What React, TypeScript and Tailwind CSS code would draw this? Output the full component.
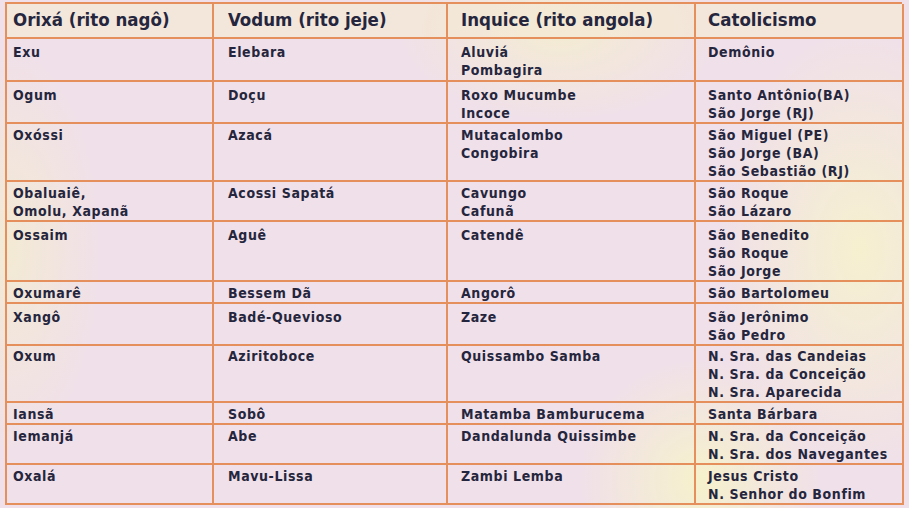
type Row = { cells: string[][]; h: string }

const HEAD = ['Orixá (rito nagô)', 'Vodum (rito jeje)', 'Inquice (rito angola)', 'Catolicismo']

const ROWS: Row[] = [
  { h: 'h-[43px]', cells: [['Exu'], ['Elebara'], ['Aluviá', 'Pombagira'], ['Demônio']] },
  { h: 'h-[40px]', cells: [['Ogum'], ['Doçu'], ['Roxo Mucumbe', 'Incoce'], ['Santo Antônio(BA)', 'São Jorge (RJ)']] },
  {
    h: 'h-[58px]',
    cells: [['Oxóssi'], ['Azacá'], ['Mutacalombo', 'Congobira'], ['São Miguel (PE)', 'São Jorge (BA)', 'São Sebastião (RJ)']],
  },
  {
    h: 'h-[42px]',
    cells: [['Obaluaiê,', 'Omolu, Xapanã'], ['Acossi Sapatá'], ['Cavungo', 'Cafunã'], ['São Roque', 'São Lázaro']],
  },
  { h: 'h-[58px]', cells: [['Ossaim'], ['Aguê'], ['Catendê'], ['São Benedito', 'São Roque', 'São Jorge']] },
  { h: 'h-[24px]', cells: [['Oxumarê'], ['Bessem Dã'], ['Angorô'], ['São Bartolomeu']] },
  { h: 'h-[39px]', cells: [['Xangô'], ['Badé-Quevioso'], ['Zaze'], ['São Jerônimo', 'São Pedro']] },
  {
    h: 'h-[58px]',
    cells: [['Oxum'], ['Aziritoboce'], ['Quissambo Samba'], ['N. Sra. das Candeias', 'N. Sra. da Conceição', 'N. Sra. Aparecida']],
  },
  { h: 'h-[22px]', cells: [['Iansã'], ['Sobô'], ['Matamba Bamburucema'], ['Santa Bárbara']] },
  {
    h: 'h-[40px]',
    cells: [['Iemanjá'], ['Abe'], ['Dandalunda Quissimbe'], ['N. Sra. da Conceição', 'N. Sra. dos Navegantes']],
  },
  { h: 'h-[42px]', cells: [['Oxalá'], ['Mavu-Lissa'], ['Zambi Lemba'], ['Jesus Cristo', 'N. Senhor do Bonfim']] },
]

// recuo do texto por coluna, como no impresso
const PAD = ['pl-[6px]', 'pl-[14px]', 'pl-[13px]', 'pl-[12px]']
const COLS = 'grid grid-cols-[207px_234px_248px_208px]'

export default function App() {
  return (
    <div
      className="h-[508px] w-[909px] overflow-hidden bg-[#f0e0e9] bg-[radial-gradient(ellipse_140px_220px_at_860px_250px,#f6f0cf_0%,transparent_100%),radial-gradient(ellipse_120px_120px_at_700px_480px,#f6f1cc_0%,transparent_100%),radial-gradient(ellipse_160px_90px_at_560px_30px,#f4ecd2_0%,transparent_100%),radial-gradient(ellipse_90px_200px_at_10px_250px,#f3ead4_0%,transparent_100%)] pt-[2px] pl-[5px] text-[#25263d]"
      style={{ fontFamily: '"DejaVu Sans Condensed", "DejaVu Sans", sans-serif' }}
    >
      <div className="w-[897px] border-t-2 border-l-2 border-[#e58f5c]">
        <div className={`${COLS} h-[35px] bg-[#f3e8d4]/70`}>
          {HEAD.map((t, i) => (
            <div
              key={i}
              className={`${PAD[i]} border-r-2 border-b-2 border-[#e58f5c] pt-[5px] text-[18.5px] leading-[22px] font-bold`}
            >
              {t}
            </div>
          ))}
        </div>
        {ROWS.map((r, ri) => (
          <div key={ri} className={`${COLS} ${r.h}`}>
            {r.cells.map((lines, ci) => (
              <div
                key={ci}
                className={`${PAD[ci]} border-r-2 border-b-2 border-[#e58f5c] pt-[4px] text-[14px] leading-[18px] font-bold tracking-[0.6px]`}
              >
                {lines.map((l, li) => (
                  <div key={li}>{l}</div>
                ))}
              </div>
            ))}
          </div>
        ))}
      </div>
    </div>
  )
}
